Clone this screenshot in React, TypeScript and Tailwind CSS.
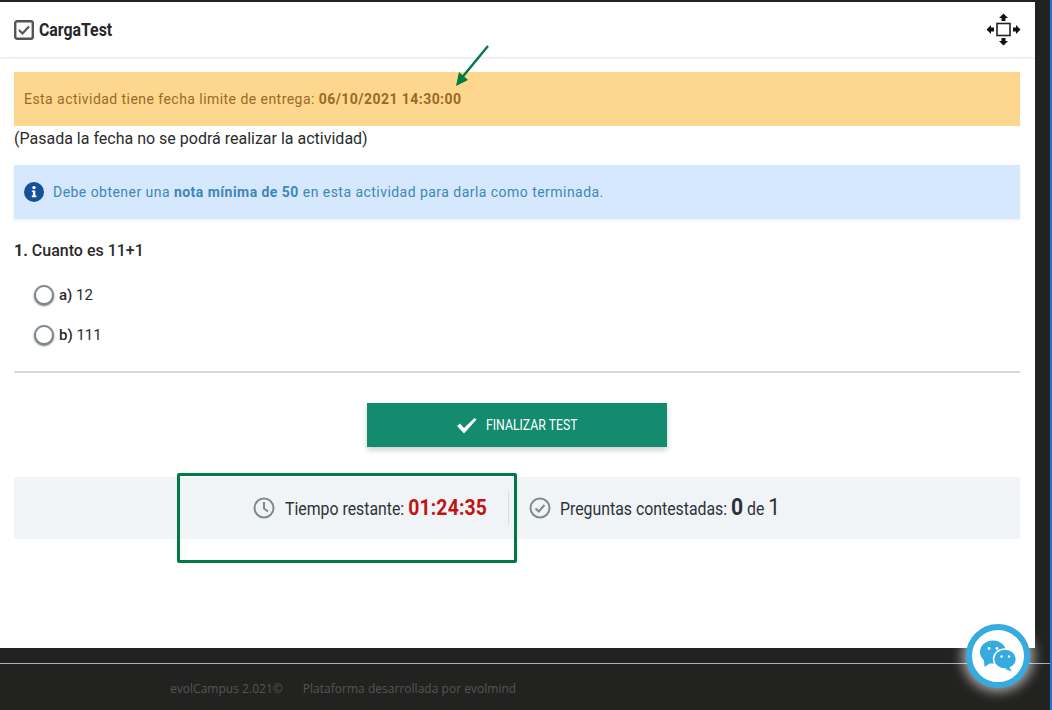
import React from "react";

const roboto = "font-['Roboto',sans-serif]";

function Cond({ children, className = "", sx = 0.85 }: { children: React.ReactNode; className?: string; sx?: number }) {
  return (
    <span className={`inline-block origin-left whitespace-nowrap ${className}`} style={{ transform: `scaleX(${sx})` }}>
      {children}
    </span>
  );
}

function Radio() {
  return <span className="w-[20px] h-[20px] rounded-full border-2 border-[#7d8a8c] bg-white shadow-[0_1px_2px_rgba(60,70,70,0.8)] shrink-0" />;
}

function MoveIcon() {
  return (
    <svg width="36" height="34" viewBox="0 0 36 34" className="block">
      <rect x="11" y="10.5" width="13" height="12" fill="none" stroke="#222" strokeWidth="1.6" />
      <path d="M17.5 0.5 L22 5 H19.5 V8 H15.5 V5 H13 Z" fill="#111" />
      <path d="M17.5 32.5 L22 28 H19.5 V25 H15.5 V28 H13 Z" fill="#111" />
      <path d="M0.5 16.5 L5 12 V14.5 H8 V18.5 H5 V21 Z" fill="#111" />
      <path d="M34.5 16.5 L30 12 V14.5 H27 V18.5 H30 V21 Z" fill="#111" />
    </svg>
  );
}

function ChatIcon() {
  return (
    <svg width="38" height="34" viewBox="0 0 38 34">
      <ellipse cx="14" cy="13" rx="13" ry="11.5" fill="#35abdf" />
      <path d="M5 21 L5.5 28 L12 23.5 Z" fill="#35abdf" />
      <ellipse cx="26" cy="20" rx="11.5" ry="10" fill="#35abdf" stroke="#fff" strokeWidth="1.5" />
      <path d="M30 28 L33 32.5 L26 30 Z" fill="#35abdf" />
      <circle cx="10" cy="9.5" r="1.4" fill="#fff" />
      <circle cx="18" cy="9.5" r="1.4" fill="#fff" />
      <circle cx="22.5" cy="17.5" r="1.2" fill="#fff" />
      <circle cx="30" cy="17.5" r="1.2" fill="#fff" />
    </svg>
  );
}

export default function App() {
  return (
    <div className={`relative w-[1052px] h-[710px] overflow-hidden bg-[#222221] ${roboto} text-[#2b2b2b]`}>
      <div className="pt-[2px] pr-[17px]">
        <div className="h-[646px] bg-white">
          <header className="h-[55px] flex items-center justify-between pl-[14px] pr-[13px] shadow-[0_1px_3px_rgba(0,0,0,0.12)]">
            <div className="flex items-center gap-[5px]">
              <svg width="20" height="20" viewBox="0 0 20 20">
                <rect x="1.2" y="1.2" width="17.6" height="17.6" rx="2" fill="none" stroke="#555" strokeWidth="2.4" />
                <path d="M5 10 L8.5 13.5 L15 6.5" fill="none" stroke="#555" strokeWidth="2.2" />
              </svg>
              <Cond className="text-[18px] font-bold text-[#262626]" sx={0.88}>CargaTest</Cond>
            </div>
            <MoveIcon />
          </header>

          <main className="pl-[14px] pr-[15px]">
            <div className="mt-[15px] h-[54px] bg-[#fdd78d] flex items-center px-[10px] text-[14px] tracking-[0.45px] text-[#9a6a26]">
              <span>Esta actividad tiene fecha limite de entrega: <b className="font-bold">06/10/2021 14:30:00</b></span>
            </div>
            <p className="mt-[2px] h-[22px] leading-[22px] text-[16px] text-[#2b2b2b]">(Pasada la fecha no se podrá realizar la actividad)</p>

            <div className="mt-[15px] h-[54px] bg-[#d6e8fd] shadow-[0_1px_3px_rgba(0,0,0,0.08)] flex items-center gap-[9px] px-[10px] text-[14px] tracking-[0.46px] text-[#3f87b5]">
              <svg width="20" height="20" viewBox="0 0 20 20" className="shrink-0">
                <circle cx="10" cy="10" r="10" fill="#15509b" />
                <circle cx="10" cy="5.6" r="1.7" fill="#fff" />
                <path d="M7.8 8.5 H11.3 V13.6 H12.4 V15.2 H7.8 V13.6 H8.9 V10.1 H7.8 Z" fill="#fff" />
              </svg>
              <span>Debe obtener una <b className="font-bold">nota mínima de 50</b> en esta actividad para darla como terminada.</span>
            </div>

            <p className="mt-[22px] h-[20px] leading-[20px] text-[16px] font-medium text-[#2b2b2b]"><b className="font-bold">1.</b> Cuanto es 11+1</p>

            <div className="mt-[24px] ml-[20px] flex flex-col gap-[20px] text-[15px]">
              <label className="flex items-center gap-[5px] h-[20px]">
                <Radio /><span><b className="font-medium">a)</b> 12</span>
              </label>
              <label className="flex items-center gap-[5px] h-[20px]">
                <Radio /><span><b className="font-medium">b)</b> 111</span>
              </label>
            </div>

            <hr className="mt-[26px] border-t-2 border-[#d8d8d8]" />

            <div className="mt-[30px] flex justify-center">
              <button className="w-[300px] h-[44px] bg-[#148b6f] shadow-[0_3px_6px_rgba(0,0,0,0.2)] flex items-center justify-center gap-[9px] text-white">
                <svg width="21" height="17" viewBox="0 0 21 17">
                  <path d="M1 9 L4 6.5 L8 11 L18.5 1 L20.5 2.5 L8 16.5 Z" fill="#fff" />
                </svg>
                <Cond className="text-[14px] w-[92px] text-left" sx={0.875}>FINALIZAR TEST</Cond>
              </button>
            </div>

            <div className="mt-[30px] h-[62px] bg-[#f0f4f6] flex items-center text-[#2d3238]">
              <div className="w-[495px] h-[34px] flex items-center justify-end border-r border-[#d9dddf] pr-[20px] gap-[10px]">
                <svg width="22" height="22" viewBox="0 0 22 22">
                  <circle cx="11" cy="11" r="9.5" fill="none" stroke="#7f8c8d" strokeWidth="2" />
                  <path d="M11 5 V11.5 L15 14.5" fill="none" stroke="#7f8c8d" strokeWidth="2" />
                </svg>
                <div className="w-[203px] whitespace-nowrap overflow-visible pb-[2px]">
                  <Cond className="text-[18px]" sx={0.88}>Tiempo restante: <b className="font-bold text-[22px] tracking-[0.2px] text-[#c01313]">01:24:35</b></Cond>
                </div>
              </div>
              <div className="ml-[20px] flex items-center gap-[9px]">
                <svg width="22" height="22" viewBox="0 0 22 22">
                  <circle cx="11" cy="11" r="9.5" fill="none" stroke="#7f8c8d" strokeWidth="2" />
                  <path d="M6.5 11.5 L9.8 14.5 L15.5 8" fill="none" stroke="#7f8c8d" strokeWidth="2" />
                </svg>
                <div className="pb-[2px]">
                  <Cond className="text-[18px]" sx={0.88}>Preguntas contestadas: <b className="font-bold text-[24px]">0</b> de <span className="text-[24px]">1</span></Cond>
                </div>
              </div>
            </div>
          </main>
        </div>
      </div>

      <footer className="mt-[15px] border-t border-[#a9b0b4] pt-[16px] pl-[170px] font-['Open_Sans',sans-serif] text-[12px] tracking-[0.02px] text-[#555555]">
        <span>evolCampus 2.021©</span>
        <span className="ml-[20px]">Plataforma desarrollada por evolmind</span>
      </footer>

      <div className="absolute left-[1050px] top-0 bottom-0 w-[2px] bg-[#1f7ad0]" />

      <div className="absolute left-[177px] top-[473px] w-[340px] h-[90px] border-[3px] border-[#007a45] rounded-[2px]" />

      <svg className="absolute left-[450px] top-[40px]" width="44" height="50" viewBox="0 0 44 50">
        <path d="M38 6 L10 40" stroke="#007a45" strokeWidth="2.4" fill="none" />
        <path d="M6 46 L9 32 L18 40 Z" fill="#007a45" />
      </svg>

      <div className="absolute left-[966px] top-[624px] w-[64px] h-[64px] rounded-full bg-white border-[6px] border-[#35abdf] shadow-[0_0_12px_4px_rgba(255,255,255,0.6)] flex items-center justify-center">
        <ChatIcon />
      </div>
    </div>
  );
}
